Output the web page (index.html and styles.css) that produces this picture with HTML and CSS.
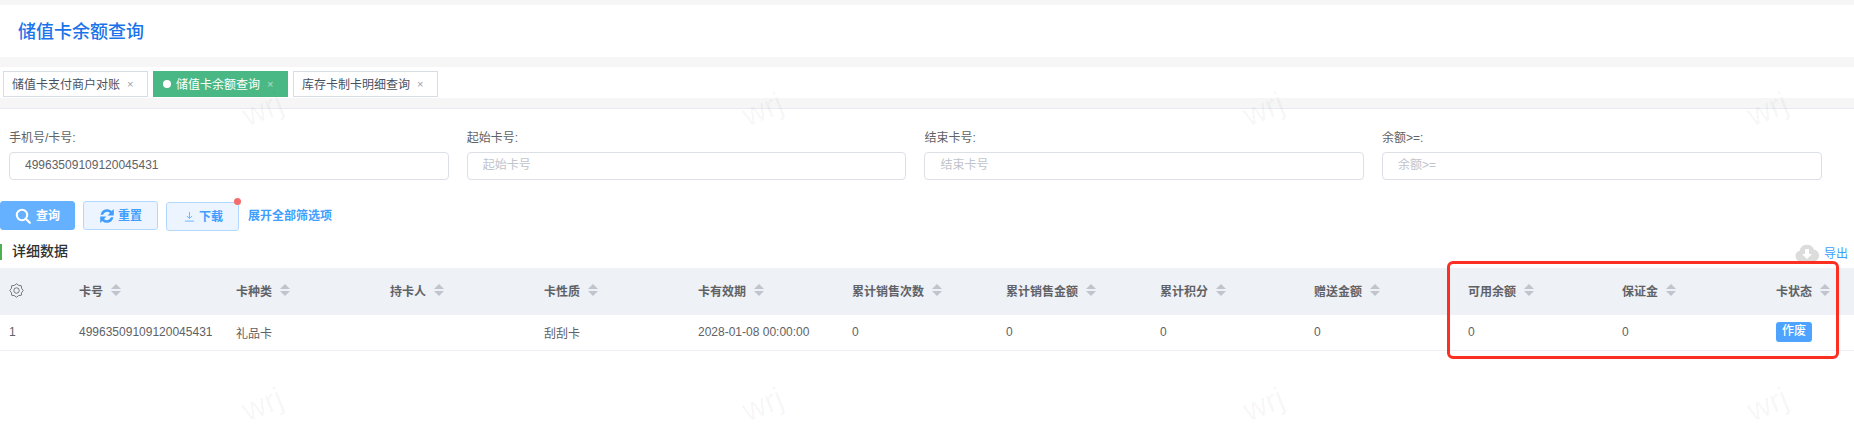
FILE: index.html
```html
<!DOCTYPE html>
<html lang="zh-CN">
<head>
<meta charset="utf-8">
<title>储值卡余额查询</title>
<link rel="stylesheet" href="styles.css">
</head>
<body>
<div class="page">
  <header class="title-bar"><h1 class="title">储值卡余额查询</h1></header>
  <nav class="tabs">
    <a class="tab"><span>储值卡支付商户对账</span><i class="close">×</i></a>
    <a class="tab tab-active"><b class="dot"></b><span>储值卡余额查询</span><i class="close">×</i></a>
    <a class="tab"><span>库存卡制卡明细查询</span><i class="close">×</i></a>
  </nav>
  <div class="tabs-foot"></div>
  <main class="main">
    <form class="filters">
      <label class="field"><span class="field-label">手机号/卡号:</span><input class="input" value="49963509109120045431"></label>
      <label class="field"><span class="field-label">起始卡号:</span><input class="input" placeholder="起始卡号"></label>
      <label class="field"><span class="field-label">结束卡号:</span><input class="input" placeholder="结束卡号"></label>
      <label class="field"><span class="field-label">余额&gt;=:</span><input class="input" placeholder="余额&gt;="></label>
    </form>
    <div class="actions">
      <button type="button" class="btn btn-primary btn-query">
        <svg class="btn-ico" viewBox="0 0 16 16" width="16" height="16"><circle cx="7" cy="7" r="5.2" fill="none" stroke="#fff" stroke-width="2"/><path d="M10.8 10.8l4 4" stroke="#fff" stroke-width="2.2" stroke-linecap="round"/></svg>
        <span>查询</span>
      </button>
      <button type="button" class="btn btn-plain btn-reset">
        <svg class="btn-ico" viewBox="0 0 16 16" width="16" height="16"><path d="M1.6 6.8A6.6 6.6 0 0 1 12.7 3.1L14.8 1V7.4H8.6l2.4-2.4A4.2 4.2 0 0 0 4.1 6.8z" fill="#409eff"/><path d="M14.4 9.2A6.6 6.6 0 0 1 3.3 12.9L1.2 15V8.6h6.2L5 11a4.2 4.2 0 0 0 6.9-1.8z" fill="#409eff"/></svg>
        <span>重置</span>
      </button>
      <button type="button" class="btn btn-plain btn-download">
        <svg class="btn-ico" viewBox="0 0 12 12" width="11" height="11"><path d="M6 1v7M3.2 5.4L6 8.2l2.8-2.8M1 11h10" fill="none" stroke="#66b1ff" stroke-width="1"/></svg>
        <span>下载</span>
        <i class="badge"></i>
      </button>
      <a class="expand">展开全部筛选项</a>
    </div>
    <div class="section-head">
      <h2 class="section-title">详细数据</h2>
      <a class="export">
        <svg viewBox="0 0 24 19" width="24" height="19"><path d="M6 18.5A5.5 5.5 0 0 1 4.6 7.7 7.5 7.5 0 0 1 19 6.6a6 6 0 0 1-.5 11.9z" fill="#dcdcdc"/><path d="M10 6h4v5h3l-5 5-5-5h3z" fill="#fff"/></svg>
        <span>导出</span>
      </a>
    </div>
    <table class="grid">
      <colgroup>
        <col class="c-gear"><col class="c-no"><col class="c-n"><col class="c-n"><col class="c-n"><col class="c-n"><col class="c-n"><col class="c-n"><col class="c-n"><col class="c-n"><col class="c-n"><col class="c-n"><col>
      </colgroup>
      <thead>
        <tr>
          <th><svg class="gear" viewBox="0 0 16 16" width="15" height="15"><path d="M15.2 8L13.45 10.26 13.09 13.09 10.26 13.45 8 15.2 5.74 13.45 2.91 13.09 2.55 10.26 .8 8 2.55 5.74 2.91 2.91 5.74 2.55 8 .8 10.26 2.55 13.09 2.91 13.45 5.74z" fill="none" stroke="#606266" stroke-width=".9" stroke-linejoin="round"/><circle cx="8" cy="8" r="2.9" fill="none" stroke="#606266" stroke-width=".9"/></svg></th>
          <th><span class="th">卡号<i class="sort"></i></span></th>
          <th><span class="th">卡种类<i class="sort"></i></span></th>
          <th><span class="th">持卡人<i class="sort"></i></span></th>
          <th><span class="th">卡性质<i class="sort"></i></span></th>
          <th><span class="th">卡有效期<i class="sort"></i></span></th>
          <th><span class="th">累计销售次数<i class="sort"></i></span></th>
          <th><span class="th">累计销售金额<i class="sort"></i></span></th>
          <th><span class="th">累计积分<i class="sort"></i></span></th>
          <th><span class="th">赠送金额<i class="sort"></i></span></th>
          <th><span class="th">可用余额<i class="sort"></i></span></th>
          <th><span class="th">保证金<i class="sort"></i></span></th>
          <th><span class="th">卡状态<i class="sort"></i></span></th>
        </tr>
      </thead>
      <tbody>
        <tr>
          <td>1</td><td>49963509109120045431</td><td>礼品卡</td><td></td><td>刮刮卡</td><td>2028-01-08 00:00:00</td><td>0</td><td>0</td><td>0</td><td>0</td><td>0</td><td>0</td><td><span class="tag">作废</span></td>
        </tr>
      </tbody>
    </table>
  </main>
  <div class="highlight"></div>
  <div class="wm wm-1">wrj</div><div class="wm wm-2">wrj</div><div class="wm wm-3">wrj</div><div class="wm wm-4">wrj</div>
  <div class="wm wm-5">wrj</div><div class="wm wm-6">wrj</div><div class="wm wm-7">wrj</div><div class="wm wm-8">wrj</div>
</div>
</body>
</html>
```
FILE: styles.css
```css
* { box-sizing: border-box; }
html, body { margin: 0; padding: 0; background: #fff; }
body { font-family: "Liberation Sans", "Noto Sans CJK SC", sans-serif; font-size: 12px; color: #606266; }
.page { position: relative; width: 1854px; height: 429px; overflow: hidden; }

.title-bar { margin-top: 5px; height: 52px; padding-left: 18px; display: flex; align-items: center; background: #fff; box-shadow: 0 -5px 0 #f6f6f6; }
.title { margin: 0; font-size: 18px; font-weight: 500; color: #1a73e8; line-height: 1; position: relative; top: 1px; }

.tabs { margin-top: 10px; height: 31px; padding: 4px 0 1px 3px; display: flex; gap: 5px; background: #fff; box-shadow: 0 -10px 0 #f6f6f6; }
.tab { height: 26px; display: flex; align-items: center; border: 1px solid #d8dce5; background: #fff; color: #495060; padding: 0 0 2px 8px; }
.tab:nth-child(1) { width: 145px; }
.tab:nth-child(3) { width: 145px; }
.tab-active { width: 135px; background: #4ab884; border-color: #4ab884; color: #fff; padding-left: 9px; }
.dot { width: 8px; height: 8px; border-radius: 50%; background: #fff; margin-right: 5px; margin-top: 2px; }
.close { font-style: normal; font-size: 11px; margin-left: 7px; opacity: .55; margin-top: 2px; }
.tabs-foot { height: 11px; background: #f6f6f6; border-bottom: 1px solid #e8eaf3; }

.filters { display: flex; gap: 18px; padding: 20px 0 0 9px; }
.field { width: 439.7px; display: block; }
.field-label { display: block; height: 23px; line-height: 18px; color: #606266; }
.input { display: block; width: 100%; height: 28px; border: 1px solid #dcdfe6; border-radius: 4px; padding: 0 15px 2px; font: inherit; color: #606266; background: #fff; outline: none; }
.input::placeholder { color: #c0c4cc; }

.actions { display: flex; align-items: flex-start; margin-top: 21px; height: 30px; }
.btn { display: flex; align-items: center; height: 29px; border-radius: 3px; font: inherit; font-weight: 700; padding: 0 0 2px; cursor: pointer; }
.btn-ico { margin-top: 2px; flex: none; }
.btn-primary { background: #66b1ff; border: 1px solid #66b1ff; color: #fff; }
.btn-plain { background: #ecf5ff; border: 1px solid #b3d8ff; color: #409eff; }
.btn-query { width: 75px; padding-left: 14px; gap: 5px; }
.btn-reset { width: 75px; margin-left: 8px; padding-left: 15px; gap: 3px; }
.btn-download { width: 73px; margin-left: 8px; margin-top: 1px; padding-left: 17px; gap: 4px; position: relative; }
.badge { position: absolute; right: -3px; top: -5px; width: 7px; height: 7px; border-radius: 50%; background: #f56c6c; }
.expand { margin-left: 9px; line-height: 30px; font-weight: 700; color: #409eff; }

.section-head { display: flex; justify-content: space-between; align-items: flex-start; height: 37px; margin-top: 13px; }
.section-title { margin: 0; height: 16px; line-height: 15px; font-size: 14px; font-weight: 500; color: #303133; border-left: 2px solid #4caf50; padding-left: 10px; }
.export { display: flex; align-items: center; gap: 5px; color: #409eff; margin: -1px 6px 0 0; height: 19px; }

.grid { width: 1854px; table-layout: fixed; border-collapse: collapse; margin-top: -13px; }
.c-gear { width: 70px; }
.c-no { width: 157px; }
.c-n { width: 154px; }
.grid th { height: 47px; padding: 0 0 3px 9px; background: #eef1f6; text-align: left; font-weight: 700; color: #606266; vertical-align: middle; }
.grid td { height: 35px; padding: 0 0 0 9px; border-bottom: 1px solid #ebeef5; color: #606266; vertical-align: middle; }
.th { display: inline-flex; align-items: center; }
.gear { display: block; }
.sort { position: relative; display: inline-block; width: 10px; height: 12px; margin-left: 8px; }
.sort::before, .sort::after { content: ""; position: absolute; left: 0; border-left: 5px solid transparent; border-right: 5px solid transparent; }
.sort::before { top: 0; border-bottom: 5px solid #c0c4cc; }
.sort::after { bottom: 0; border-top: 5px solid #c0c4cc; }
.tag { display: inline-block; width: 36px; height: 20px; line-height: 19px; text-align: center; border-radius: 3px; background: #4da3ff; color: #fff; font-weight: 500; }

.highlight { position: absolute; left: 1447px; top: 261px; width: 392px; height: 98px; border: 3px solid #fb3022; border-radius: 6px; }

.wm { position: absolute; font-size: 32px; line-height: 24px; height: 24px; color: rgba(0, 0, 0, .045); transform: rotate(-22deg); pointer-events: none; }
.wm-1 { left: 242px; top: 97px; }
.wm-2 { left: 742px; top: 97px; }
.wm-3 { left: 1243px; top: 97px; }
.wm-4 { left: 1747px; top: 97px; }
.wm-5 { left: 242px; top: 392px; }
.wm-6 { left: 742px; top: 392px; }
.wm-7 { left: 1243px; top: 392px; }
.wm-8 { left: 1747px; top: 392px; }
```
